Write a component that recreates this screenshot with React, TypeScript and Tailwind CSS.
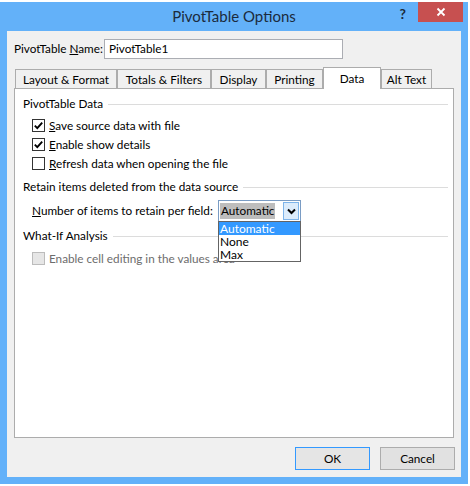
import React from 'react';

type CheckboxProps = {
  checked?: boolean;
  disabled?: boolean;
};

function Checkbox({ checked, disabled }: CheckboxProps) {
  return (
    <span
      className={
        disabled
          ? 'flex h-[13px] w-[13px] shrink-0 items-center justify-center border border-[#bcbcbc] bg-[#e6e6e6]'
          : 'flex h-[13px] w-[13px] shrink-0 items-center justify-center border border-[#333333] bg-white'
      }
    >
      {checked && (
        <svg width="11" height="11" viewBox="0 0 11 11">
          <path d="M1.8 5.6 L4.3 8.1 L9.2 2.6" fill="none" stroke="#000" strokeWidth="1.9" />
        </svg>
      )}
    </span>
  );
}

function SectionHeading({ label }: { label: string }) {
  return (
    <div className="flex h-[16px] items-center pl-[8px] pr-[5px]">
      <span className="whitespace-nowrap">{label}</span>
      <span className="ml-[5px] h-px flex-1 bg-[#dcdcdc]" />
    </div>
  );
}

const tabs = [
  { label: 'Layout & Format', width: 'w-[102px]' },
  { label: 'Totals & Filters', width: 'w-[94px]' },
  { label: 'Display', width: 'w-[55px]' },
  { label: 'Printing', width: 'w-[57px]' },
  { label: 'Data', width: 'w-[58px]', active: true },
  { label: 'Alt Text', width: 'w-[51px]' },
];

export default function App() {
  return (
    <div className="h-[486px] w-[470px] bg-white pt-[2px] font-['Segoe_UI',Lato,sans-serif] text-[11.75px] text-black">
      <div className="flex h-[482px] w-[468px] flex-col bg-[#63b1f9]">
        {/* title bar */}
        <div className="grid h-[29px] shrink-0 grid-cols-[1fr_auto_1fr]">
          <div />
          <div className="flex items-center text-[15px] text-[#1b2b3d]">PivotTable Options</div>
          <div className="flex items-start justify-end pr-[5px]">
            <span className="mt-[5px] mr-[12px] text-[14px] font-bold leading-none text-[#1b2b3d]">?</span>
            <button type="button" className="flex h-[20px] w-[45px] items-center justify-center bg-[#c75050]">
              <svg width="10" height="10" viewBox="0 0 10 10">
                <path d="M1.5 1.5 L8.5 8.5 M8.5 1.5 L1.5 8.5" stroke="#fff" strokeWidth="1.8" />
              </svg>
            </button>
          </div>
        </div>

        {/* client area */}
        <div className="mx-[7px] mb-[7px] flex flex-1 flex-col bg-[#f0f0f0]">
          <div className="flex items-center pl-[7px] pt-[8px]">
            <span className="w-[90px] whitespace-nowrap">
              PivotTable <span className="underline">N</span>ame:
            </span>
            <div className="flex h-[20px] w-[239px] items-center border border-[#abadb3] bg-white pl-[4px]">
              PivotTable1
            </div>
          </div>

          <div className="ml-[8px] mt-[8px] flex h-[21px] items-end">
            {tabs.map((tab) =>
              tab.active ? (
                <div
                  key={tab.label}
                  className={`relative z-10 -mb-px flex h-[22px] items-center justify-center border border-b-0 border-[#acacac] bg-white ${tab.width}`}
                >
                  {tab.label}
                </div>
              ) : (
                <div
                  key={tab.label}
                  className={`flex h-[19px] items-center justify-center border border-b-0 border-[#acacac] bg-[#f0f0f0] pt-px ${tab.width}`}
                >
                  {tab.label}
                </div>
              ),
            )}
          </div>

          <div className="ml-[7px] flex h-[350px] w-[440px] flex-col border border-[#acacac] bg-white pt-[7px]">
            <SectionHeading label="PivotTable Data" />
            <div className="mt-[4px] flex flex-col pl-[17px]">
              <label className="flex h-[19px] items-center gap-[4px]">
                <Checkbox checked />
                <span>
                  <span className="underline">S</span>ave source data with file
                </span>
              </label>
              <label className="flex h-[19px] items-center gap-[4px]">
                <Checkbox checked />
                <span>
                  <span className="underline">E</span>nable show details
                </span>
              </label>
              <label className="flex h-[19px] items-center gap-[4px]">
                <Checkbox />
                <span>
                  <span className="underline">R</span>efresh data when opening the file
                </span>
              </label>
            </div>

            <div className="mt-[6px]">
              <SectionHeading label="Retain items deleted from the data source" />
            </div>
            <div className="mt-[5px] flex items-center pl-[17px]">
              <span className="w-[186px] whitespace-nowrap">
                <span className="underline">N</span>umber of items to retain per field:
              </span>
              <div className="relative z-20 flex h-[22px] w-[83px] items-center border border-[#7a9cc4] bg-white pl-[1px]">
                <span className="flex h-[16px] w-[55px] items-center bg-[#bdbdbd] pl-[1px]">Automatic</span>
                <span className="ml-auto mr-px flex h-[18px] w-[16px] items-center justify-center border border-[#7eb4ea] bg-[#dcecfc]">
                  <svg width="9" height="7" viewBox="0 0 9 7">
                    <path d="M1 1.5 L4.5 5 L8 1.5" fill="none" stroke="#000" strokeWidth="2" />
                  </svg>
                </span>
                <div className="absolute left-[-1px] top-[20px] flex w-[83px] flex-col border border-[#646464] bg-white text-[12px] leading-[13px]">
                  <span className="h-[13px] bg-[#3399ff] pl-[1px] text-white">Automatic</span>
                  <span className="h-[13px] pl-[1px]">None</span>
                  <span className="h-[13px] pl-[1px]">Max</span>
                </div>
              </div>
            </div>

            <div className="mt-[6px]">
              <SectionHeading label="What-If Analysis" />
            </div>
            <div className="mt-[5px] flex flex-col pl-[17px]">
              <label className="flex h-[19px] items-center gap-[4px] text-[#6d6d6d]">
                <Checkbox disabled />
                <span>Enable cell editing in the values area</span>
              </label>
            </div>
          </div>

          <div className="mt-[9px] flex justify-end gap-[10px] pr-[6px]">
            <button
              type="button"
              className="flex h-[23px] w-[75px] items-center justify-center border border-[#3399ff] bg-[#e5e5e5]"
            >
              OK
            </button>
            <button
              type="button"
              className="flex h-[23px] w-[75px] items-center justify-center border border-[#acacac] bg-[#e1e1e1]"
            >
              Cancel
            </button>
          </div>
        </div>
      </div>
    </div>
  );
}
